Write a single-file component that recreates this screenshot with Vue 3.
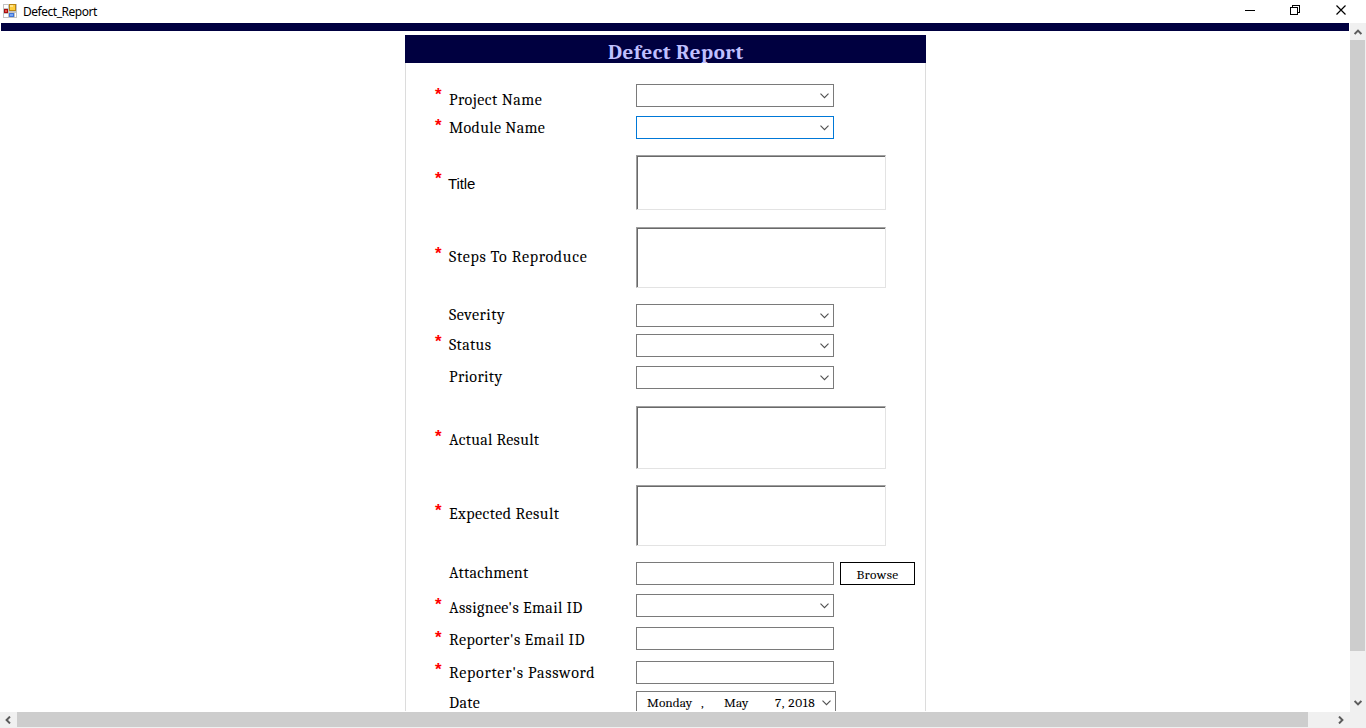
<script setup>
const rows = [
  { id: 'project', label: 'Project Name', required: true, kind: 'combo' },
  { id: 'module', label: 'Module Name', required: true, kind: 'combo' },
  { id: 'title', label: 'Title', required: true, kind: 'area' },
  { id: 'steps', label: 'Steps To Reproduce', required: true, kind: 'area' },
  { id: 'severity', label: 'Severity', kind: 'combo' },
  { id: 'status', label: 'Status', required: true, kind: 'combo' },
  { id: 'priority', label: 'Priority', kind: 'combo' },
  { id: 'actual', label: 'Actual Result', required: true, kind: 'area' },
  { id: 'expected', label: 'Expected Result', required: true, kind: 'area' },
  { id: 'attachment', label: 'Attachment', kind: 'file' },
  { id: 'assignee', label: "Assignee's Email ID", required: true, kind: 'combo' },
  { id: 'reporter', label: "Reporter's Email ID", required: true, kind: 'text' },
  { id: 'password', label: "Reporter's Password", required: true, kind: 'text' },
  { id: 'date', label: 'Date', kind: 'date' },
]
</script>

<template>
  <div class="window">
    <header class="titlebar">
      <svg class="app-icon" width="14" height="14" viewBox="0 0 14 14" shape-rendering="crispEdges">
        <rect width="14" height="14" fill="#c3c3c3" />
        <path d="M1 1h4v3H1zM1 10h4v3H1zM12 9h1v4h-1z" fill="#fff" />
        <rect x="6" width="7" height="7" fill="#b98614" />
        <rect x="7" y="1" width="5" height="5" fill="#ffce3c" />
        <rect x="7" y="1" width="3" height="2" fill="#ffe58c" />
        <rect x="1" y="5" width="4" height="4" fill="#a80d0d" />
        <rect x="2" y="6" width="2" height="2" fill="#e2544b" />
        <rect x="6" y="9" width="5" height="4" fill="#3f73d8" />
        <rect x="7" y="10" width="3" height="2" fill="#79a7f5" />
      </svg>
      <span class="caption">Defect_Report</span>
      <svg class="win-buttons" width="104" height="22" viewBox="0 0 104 22" fill="none" stroke="#000">
        <path d="M0 10.5h10" shape-rendering="crispEdges" />
        <path d="M45.500 7.500h7v7h-7zM47.500 7.500v-2h7v7h-2" shape-rendering="crispEdges" />
        <path d="M91.500 5.500l9 9M100.500 5.500l-9 9" stroke-width="1.200" />
      </svg>
    </header>

    <div class="body">
      <main class="viewport">
        <div class="band"></div>
        <section class="panel">
          <h1 class="heading"><span>Defect Report</span></h1>
          <div v-for="r in rows" :key="r.id" class="row" :class="['row-' + r.id, 'kind-' + r.kind]">
            <span class="mark">{{ r.required ? '*' : '' }}</span>
            <span class="label"><span>{{ r.label }}</span></span>
            <div class="control">
              <template v-if="r.kind === 'date'">
                <span class="weekday">Monday</span>
                <span class="comma">,</span>
                <span class="month">May</span>
                <span class="day">7, 2018</span>
              </template>
              <svg v-if="r.kind === 'combo' || r.kind === 'date'" class="chevron" width="9" height="6" viewBox="0 0 9 6" fill="none" stroke="#505050" stroke-width="1.100">
                <path d="M.5.7l4 4 4-4" />
              </svg>
            </div>
            <button v-if="r.kind === 'file'" class="browse">Browse</button>
          </div>
        </section>
      </main>
      <aside class="vbar">
        <svg class="up" width="8" height="6" viewBox="0 0 8 6" fill="none" stroke="#5c5c5c" stroke-width="2"><path d="M.6 5l3.400-3.400L7.400 5" /></svg>
        <div class="vthumb"></div>
        <svg class="down" width="8" height="6" viewBox="0 0 8 6" fill="none" stroke="#5c5c5c" stroke-width="2"><path d="M.6 1l3.400 3.400L7.400 1" /></svg>
      </aside>
    </div>
    <footer class="hbar">
      <svg class="left" width="6" height="8" viewBox="0 0 6 8" fill="none" stroke="#5c5c5c" stroke-width="2"><path d="M5 .6L1.600 4 5 7.400" /></svg>
      <div class="hthumb"></div>
      <svg class="right" width="6" height="8" viewBox="0 0 6 8" fill="none" stroke="#5c5c5c" stroke-width="2"><path d="M1 .6L4.400 4 1 7.400" /></svg>
    </footer>
  </div>
</template>

<style>
body { overflow: hidden; background: #fff; }
</style>

<style scoped>
* { box-sizing: border-box; }
.window {
  width: 1366px;
  height: 728px;
  display: flex;
  flex-direction: column;
  overflow: hidden;
  background: #fff;
  color: #000;
  font-family: Cambria, "DejaVu Serif Condensed", "DejaVu Serif", serif;
}
svg { display: block; flex: none; }

.titlebar { height: 23px; flex: none; display: flex; align-items: flex-start; padding-left: 3px; }
.app-icon { margin-top: 4px; }
.caption {
  margin: 3px 0 0 6px;
  font: 12px/18px "Noto Sans", sans-serif;
  letter-spacing: -0.47px;
}
.win-buttons { margin-left: auto; margin-right: 17px; }

.body { height: 689px; flex: none; display: flex; }
.viewport { width: 1349px; height: 688px; flex: none; padding-left: 1px; overflow: hidden; }
.band { height: 8px; background: #000040; }
.panel {
  width: 521px;
  height: 690px;
  margin: 4px 0 0 404px;
  border: solid #dcdcdc;
  border-width: 0 1px;
}
.heading {
  height: 28px;
  margin: 0 -1px 21px;
  padding-left: 203px;
  overflow: hidden;
  background: #000040;
  color: #c0c0ff;
  font-size: 21px;
  font-weight: bold;
  line-height: 34px;
  letter-spacing: 0.55px;
  white-space: nowrap;
}

.row { display: flex; align-items: flex-start; height: 23px; padding-left: 29px; }
.mark {
  width: 14px;
  flex: none;
  margin-top: var(--mark, 0);
  color: #f00;
  font: bold 17px/14px "Liberation Sans", sans-serif;
}
.label {
  width: 187px;
  flex: none;
  margin-top: var(--label, 1px);
  font-size: 16px;
  line-height: 20px;
  letter-spacing: var(--track, 0.4px);
  white-space: nowrap;
}
.control {
  width: 198px;
  height: 23px;
  flex: none;
  display: flex;
  border: 1px solid #7a7a7a;
  background: #fff;
}
.chevron { margin: 8px 4px 0 auto; }
.kind-area .control {
  width: 250px;
  height: 100%;
  border: 1px solid #e3e3e3;
  border-top-color: #a0a0a0;
  border-left-color: #a0a0a0;
  box-shadow: inset 1px 1px #696969;
}
.browse {
  width: 75px;
  height: 23px;
  margin: 0 0 0 6px;
  padding: 2px 0 0;
  border: 1px solid #000;
  background: #fff;
  color: #000;
  font-family: inherit;
  font-size: 13.33px;
  letter-spacing: 0.4px;
}

.row-project { --mark: 4px; --label: 6px; --track: 0.47px; }
.row-module { margin-top: 9px; --mark: 3px; --label: 2px; --track: 0.34px; }
.row-module .control { border-color: #0078d7; }
.row-title { height: 55px; margin-top: 16px; --mark: 17px; --label: 19px; --track: -0.1px; }
.row-title .label { margin-left: -1px; margin-right: 1px; font-family: "Liberation Sans", sans-serif; font-size: 15px; }
.row-steps { height: 61px; margin-top: 17px; --mark: 20px; --label: 20px; --track: 0.69px; }
.row-severity { margin-top: 16px; --track: 0.52px; }
.row-status { margin-top: 7px; --mark: 1px; --track: 0.35px; }
.row-priority { margin-top: 9px; --track: 0.35px; }
.row-actual { height: 63px; margin-top: 17px; --mark: 24px; --label: 24px; --track: 0.28px; }
.row-expected { height: 61px; margin-top: 16px; --mark: 19px; --label: 19px; --track: 0.46px; }
.row-attachment { margin-top: 16px; --track: 0.24px; }
.row-assignee { margin-top: 9px; --mark: 4px; --label: 4px; --track: 0.35px; }
.row-reporter { margin-top: 10px; --mark: 4px; --label: 3px; --track: 0.42px; }
.row-password { margin-top: 11px; --mark: 2px; --label: 2px; --track: 0.73px; }
.row-date { margin-top: 7px; --label: 2px; --track: 0.4px; }
.row-date .control { width: 200px; padding-left: 10px; font-size: 13.33px; line-height: 22px; letter-spacing: 0.05px; white-space: nowrap; }
.weekday { width: 54px; }
.comma { width: 23px; }
.month { width: 51px; }
.day { letter-spacing: 0.6px; }

.vbar { width: 16px; height: 689px; margin-left: 1px; background: #f0f0f0; display: flex; flex-direction: column; align-items: flex-start; }
.up { margin: 6px 0 5px 4px; }
.vthumb { width: 15px; height: 611px; background: #cdcdcd; }
.down { margin: 49px 0 0 4px; }
.hbar { height: 16px; flex: none; background: #f0f0f0; display: flex; align-items: flex-start; }
.left { margin: 4px 6px 0 5px; }
.hthumb { width: 1291px; height: 15px; background: #cdcdcd; }
.right { margin: 4px 0 0 30px; }
</style>
